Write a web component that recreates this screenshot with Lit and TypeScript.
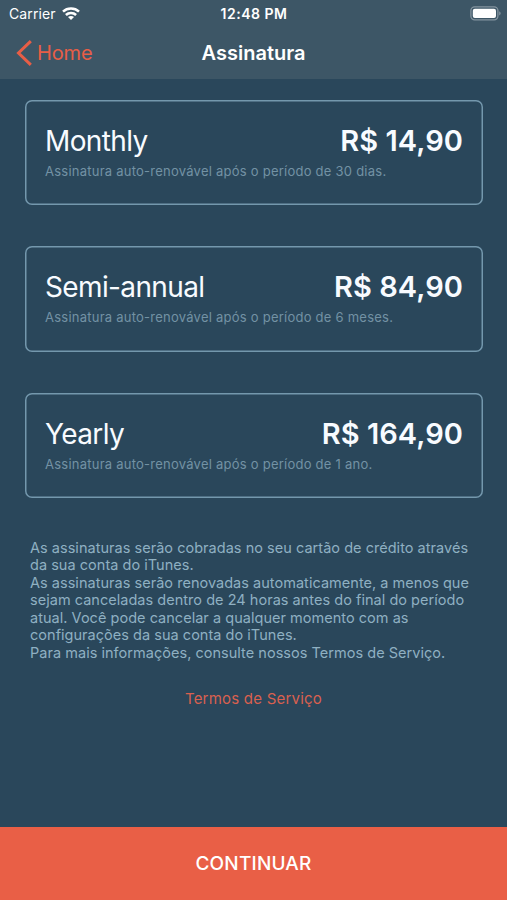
import { LitElement, html, css } from "lit";
import { customElement, property } from "lit/decorators.js";

@customElement("plan-card")
class PlanCard extends LitElement {
  @property() name = "";
  @property() price = "";
  @property() period = "";

  static styles = css`
    :host {
      display: block;
      box-sizing: border-box;
      height: 105.6px;
      padding: 23px 20px 0 20px;
      box-shadow: inset 0 0 0 1.5px #7498ad;
      border-radius: 7px;
    }
    .row {
      display: flex;
      justify-content: space-between;
      height: 36px;
      line-height: 36px;
      color: #f8fbff;
      white-space: nowrap;
    }
    .name {
      font-size: 28px;
      letter-spacing: -0.63px;
    }
    .price {
      font-size: 29px;
      font-weight: 600;
      letter-spacing: 0.05px;
    }
    .note {
      margin-top: 3px;
      font-size: 13px;
      line-height: 18px;
      color: #7392a4;
      letter-spacing: 0.24px;
      white-space: nowrap;
    }
  `;

  render() {
    return html`
      <div class="row">
        <span class="name">${this.name}</span>
        <span class="price">${this.price}</span>
      </div>
      <div class="note">Assinatura auto-renovável após o período de ${this.period}.</div>
    `;
  }
}

@customElement("app-root")
class AppRoot extends LitElement {
  static styles = css`
    :host {
      display: flex;
      flex-direction: column;
      box-sizing: border-box;
      height: 900px;
      overflow: hidden;
      background: #2a475b;
      color: #fff;
      font-family: Inter, "Liberation Sans", sans-serif;
    }
    .top {
      height: 78.5px;
      background: #3d5666;
    }
    .status,
    .nav {
      display: grid;
      grid-template-columns: 1fr auto 1fr;
      align-items: center;
    }
    .status {
      height: 27px;
      padding: 0 6px 0 9px;
      font-size: 14px;
    }
    .carrier {
      display: flex;
      align-items: center;
      gap: 6px;
      letter-spacing: 0.1px;
    }
    .time {
      font-weight: 600;
      font-size: 14px;
      letter-spacing: 0.5px;
      margin-left: -2px;
    }
    .battery {
      justify-self: end;
    }
    svg {
      display: block;
    }
    .nav {
      height: 51px;
      padding: 0 16px;
    }
    .back {
      display: flex;
      align-items: center;
      gap: 5px;
      color: #e85e46;
      font-size: 20px;
      letter-spacing: -0.15px;
    }
    .title {
      font-size: 20px;
      font-weight: 600;
    }
    .plans {
      display: flex;
      flex-direction: column;
      gap: 41px;
      padding: 21px 24px 0 25px;
    }
    .terms {
      margin: 40.5px 30px 0;
      font-size: 14.5px;
      line-height: 17.5px;
      letter-spacing: 0.03px;
      color: #8fb0c2;
      white-space: nowrap;
    }
    .link {
      margin-top: 28px;
      text-align: center;
      font-size: 15px;
      line-height: 20px;
      letter-spacing: 0.22px;
      color: #d9604f;
    }
    .continue {
      display: flex;
      align-items: center;
      justify-content: center;
      height: 73px;
      margin-top: auto;
      background: #e95f46;
      font-size: 19px;
      font-weight: 500;
      letter-spacing: 0.2px;
    }
  `;

  render() {
    return html`
      <div class="top">
        <div class="status">
          <div class="carrier">
            <span>Carrier</span>
            <svg width="18" height="14" viewBox="0 0 18 14" fill="none" stroke="#fff" stroke-width="2.5">
              <path d="M1 4.6C5.4 .4 12.6 .4 17 4.6" />
              <path d="M3.9 8C6.7 5.2 11.3 5.2 14.1 8" />
              <path d="M9 13L6 10C7.7 8.5 10.3 8.5 12 10Z" fill="#fff" stroke="none" />
            </svg>
          </div>
          <span class="time">12:48 PM</span>
          <svg class="battery" width="31" height="15" viewBox="0 0 31 15">
            <rect x=".9" y=".8" width="27" height="13" rx="3.8" fill="none" stroke="#84949f" stroke-width="1.3" />
            <rect x="2.8" y="2.7" width="23.2" height="9.2" rx="2" fill="#fff" />
            <path d="M29.2 5.2C31.1 6 31.1 8.6 29.2 9.4Z" fill="#84949f" />
          </svg>
        </div>
        <div class="nav">
          <div class="back">
            <svg width="16" height="26" viewBox="0 0 16 26" fill="none" stroke="#e85e46" stroke-width="3">
              <path d="M14.8 1.1L2.5 13L14.8 24.9" />
            </svg>
            <span>Home</span>
          </div>
          <span class="title">Assinatura</span>
        </div>
      </div>
      <div class="plans">
        <plan-card name="Monthly" price="R$ 14,90" period="30 dias"></plan-card>
        <plan-card name="Semi-annual" price="R$ 84,90" period="6 meses"></plan-card>
        <plan-card name="Yearly" price="R$ 164,90" period="1 ano"></plan-card>
      </div>
      <div class="terms">
        As assinaturas serão cobradas no seu cartão de crédito através<br />
        da sua conta do iTunes.<br />
        As assinaturas serão renovadas automaticamente, a menos que<br />
        sejam canceladas dentro de 24 horas antes do final do período<br />
        atual. Você pode cancelar a qualquer momento com as<br />
        configurações da sua conta do iTunes.<br />
        Para mais informações, consulte nossos Termos de Serviço.
      </div>
      <div class="link">Termos de Serviço</div>
      <div class="continue">CONTINUAR</div>
    `;
  }
}
